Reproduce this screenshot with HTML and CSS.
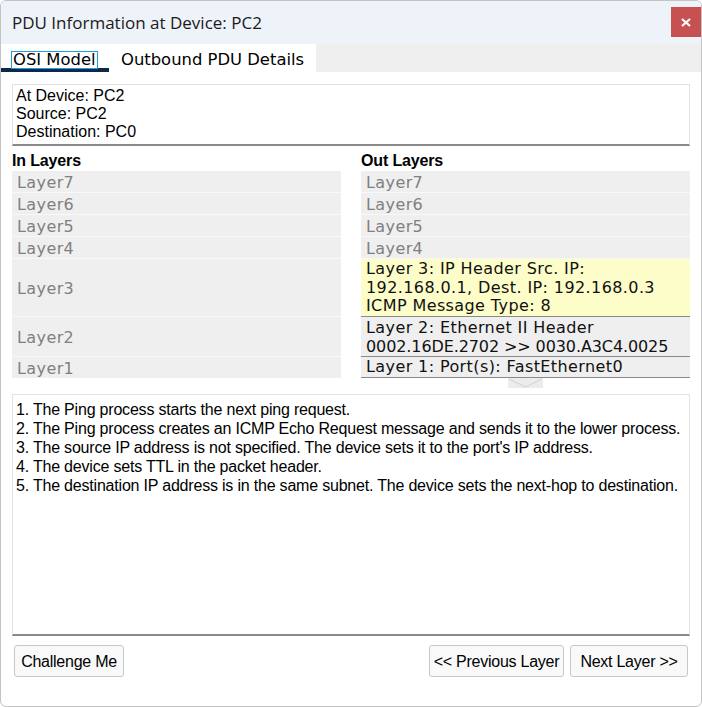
FILE: index.html
```html
<!DOCTYPE html>
<html>
<head>
<meta charset="utf-8">
<link rel="stylesheet" href="styles.css">
</head>
<body>
<div class="window">
  <div class="titlebar">
    <span class="title">PDU Information at Device: PC2</span>
    <span class="close"><svg width="10" height="9" viewBox="0 0 10 9"><path d="M1 1 L9 8 M9 1 L1 8" stroke="#fff" stroke-width="2.2"/></svg></span>
  </div>
  <div class="tabstrip">
    <div class="tab active"><span class="focus">OSI Model</span></div>
    <div class="tab">Outbound PDU Details</div>
  </div>
  <div class="content">
    <div class="infobox">
      <div>At Device: PC2</div>
      <div>Source: PC2</div>
      <div>Destination: PC0</div>
    </div>
    <div class="columns">
      <div class="col">
        <div class="colhead">In Layers</div>
        <div class="row h1">Layer7</div>
        <div class="row h1">Layer6</div>
        <div class="row h1">Layer5</div>
        <div class="row h1">Layer4</div>
        <div class="row h3">Layer3</div>
        <div class="row h2">Layer2</div>
        <div class="row h1 last">Layer1</div>
      </div>
      <div class="col">
        <div class="colhead">Out Layers</div>
        <div class="row h1">Layer7</div>
        <div class="row h1">Layer6</div>
        <div class="row h1">Layer5</div>
        <div class="row h1">Layer4</div>
        <div class="row on yellow">Layer 3: IP Header Src. IP:<br>192.168.0.1, Dest. IP: 192.168.0.3<br>ICMP Message Type: 8</div>
        <div class="row on">Layer 2: Ethernet II Header<br><span class="tight">0002.16DE.2702 &gt;&gt; 0030.A3C4.0025</span></div>
        <div class="row on l1">Layer 1: Port(s): FastEthernet0</div>
        <div class="arrow"><svg width="35" height="10" viewBox="0 0 35 10"><rect x="0" y="0" width="35" height="10" fill="#ececec"/><path d="M1 1 L17.5 9 L34 1" fill="none" stroke="#d2d2d2" stroke-width="1"/></svg></div>
      </div>
    </div>
    <div class="desc">
      <div>1. The Ping process starts the next ping request.</div>
      <div>2. The Ping process creates an ICMP Echo Request message and sends it to the lower process.</div>
      <div>3. The source IP address is not specified. The device sets it to the port's IP address.</div>
      <div>4. The device sets TTL in the packet header.</div>
      <div>5. The destination IP address is in the same subnet. The device sets the next-hop to destination.</div>
    </div>
    <div class="buttons">
      <button class="btn b-challenge">Challenge Me</button>
      <span class="spacer"></span>
      <button class="btn b-prev">&lt;&lt; Previous Layer</button>
      <button class="btn b-next">Next Layer &gt;&gt;</button>
    </div>
  </div>
</div>
</body>
</html>
```
FILE: styles.css
```css
html, body {
  margin: 0;
  padding: 0;
  background: #ffffff;
}
.window {
  width: 702px;
  height: 707px;
  box-sizing: border-box;
  border: 1px solid #c4c4c4;
  border-radius: 6px;
  background: #ffffff;
  overflow: hidden;
  display: flex;
  flex-direction: column;
}
.titlebar {
  height: 43px;
  flex: none;
  background: #eef2f9;
  display: flex;
  align-items: center;
  justify-content: space-between;
  padding-left: 11px;
  padding-right: 0;
}
.title {
  font-family: "Open Sans", sans-serif;
  font-size: 17px;
  color: #1a1a1a;
}
.close {
  width: 30px;
  height: 30px;
  background: #c75050;
  margin-top: -1px;
  display: flex;
  align-items: center;
  justify-content: center;
}
.tabstrip {
  height: 28px;
  flex: none;
  background: #efefef;
  display: flex;
}
.tab {
  background: #ffffff;
  font-family: "DejaVu Sans", Verdana, sans-serif;
  font-size: 16.4px;
  color: #000;
  padding: 2px 12px 0 12px;
  line-height: 28px;
  box-sizing: border-box;
}
.tab.active {
  width: 108px;
  padding: 0 0 0 10px;
  border-bottom: 4px solid #0f2848;
  line-height: 24px;
}
.focus {
  display: inline-block;
  border: 1px solid #1ea0e0;
  line-height: 15px;
  padding: 0 1px 1px 1px;
  margin-top: 7px;
}
.content {
  flex: 1;
  padding: 12px 11px 0 11px;
  display: flex;
  flex-direction: column;
}
.infobox {
  border: 1px solid #e2e2e2;
  border-bottom: 2px solid #8a8a8a;
  padding: 2px 3px 3px 3px;
  font-family: "Liberation Sans", Arial, sans-serif;
  font-size: 16px;
  line-height: 18px;
  color: #000;
}
.columns {
  display: grid;
  grid-template-columns: 329px 329px;
  column-gap: 20px;
  margin-top: 6px;
}
.col {
  display: flex;
  flex-direction: column;
}
.colhead {
  font-family: "Liberation Sans", Arial, sans-serif;
  font-weight: bold;
  font-size: 16px;
  letter-spacing: -0.15px;
  line-height: 18px;
  height: 19px;
  color: #000;
}
.row {
  background: #efefef;
  border-bottom: 1px solid #f8f8f8;
  font-family: "DejaVu Sans", Verdana, sans-serif;
  font-size: 16px;
  letter-spacing: 0.4px;
  color: #808080;
  padding: 1px 5px 0 5px;
  display: flex;
  align-items: center;
  box-sizing: border-box;
}
.row.h1 { height: 22px; }
.row.h3 { height: 58px; }
.row.h2 { height: 40px; }
.row.last { height: 21px; border-bottom: none; }
.row.on {
  color: #111;
  display: block;
  line-height: 19px;
  border-bottom: 1px solid #8a8a8a;
  height: 40px;
  padding-top: 1px;
}
.row.on.yellow {
  background: #fdfdc9;
  line-height: 18.5px;
  height: 58px;
  padding-top: 1px;
}
.row.on.l1 { height: 21px; line-height: 20px; padding-top: 0; }
.tight { letter-spacing: -0.1px; }
.arrow {
  align-self: flex-start;
  margin-left: 147px;
  height: 10px;
  line-height: 0;
}
.desc {
  margin-top: 6px;
  height: 242px;
  flex: none;
  box-sizing: border-box;
  border: 1px solid #e2e2e2;
  border-bottom: 2px solid #8a8a8a;
  padding: 5px 3px 3px 3px;
  font-family: "Liberation Sans", Arial, sans-serif;
  font-size: 16px;
  letter-spacing: -0.2px;
  line-height: 19px;
  color: #000;
}
.buttons {
  display: flex;
  gap: 6px;
  margin-top: 9px;
  padding: 0 2px 0 2px;
}
.spacer { flex: 1; }
.btn {
  height: 32px;
  background: #f9f9f9;
  border: 1px solid #c8c8c8;
  border-radius: 3px;
  font-family: "Liberation Sans", Arial, sans-serif;
  font-size: 16px;
  letter-spacing: -0.25px;
  color: #000;
  padding: 1px 0 0 0;
  text-align: center;
}
.b-challenge { width: 110px; }
.b-prev { width: 135px; }
.b-next { width: 118px; }
```
